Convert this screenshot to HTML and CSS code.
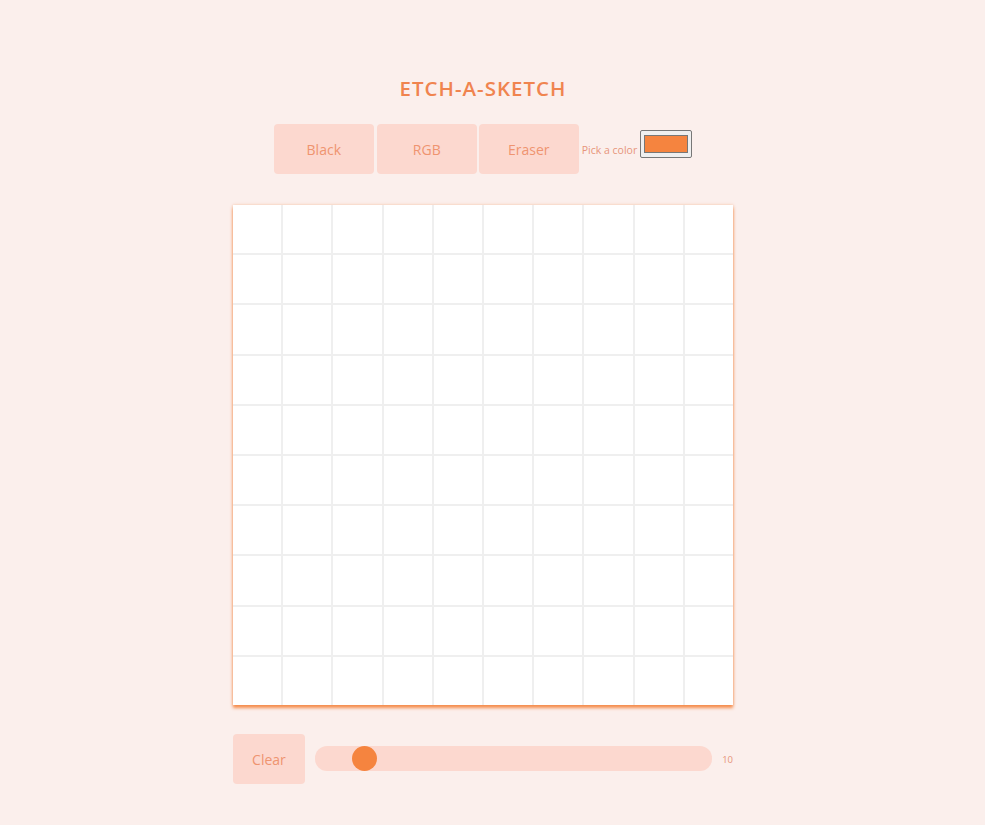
FILE: index.html
```html
<!DOCTYPE html>
<html>
<head>
<meta charset="utf-8">
<link rel="stylesheet" href="styles.css">
</head>
<body>
<main class="app">
  <h1 class="title">ETCH-A-SKETCH</h1>
  <div class="toolbar">
    <button class="btn mode">Black</button>
    <button class="btn mode">RGB</button>
    <button class="btn mode eraser">Eraser</button>
    <label class="picker-label">Pick a color</label>
    <span class="picker"><span class="swatch"></span></span>
  </div>
  <div class="board" id="board"></div>
  <div class="controls">
    <button class="btn clear">Clear</button>
    <input class="slider" type="range" min="0" max="100" value="10">
    <span class="size">10</span>
  </div>
</main>
<script>
  var b = document.getElementById('board');
  for (var i = 0; i < 100; i++) { var d = document.createElement('div'); d.className = 'cell'; b.appendChild(d); }
</script>
</body>
</html>
```
FILE: styles.css
```css
html, body { margin: 0; padding: 0; }
body {
  background: #fbefec;
  font-family: "Open Sans", "DejaVu Sans", sans-serif;
  height: 825px;
}
.app {
  width: 966px;
  display: flex;
  flex-direction: column;
  align-items: center;
  padding-top: 75px;
}
.title {
  margin: 0;
  color: #f0844f;
  font-size: 20.5px;
  font-weight: 600;
  letter-spacing: 1px;
  line-height: 26px;
}
.toolbar {
  display: flex;
  align-items: center;
  margin-top: 23px;
  gap: 3px;
  margin-left: 0;
}
.btn {
  border: none;
  background: #fcd8cf;
  color: #ef9470;
  font-family: inherit;
  font-size: 14px;
  border-radius: 4px;
  height: 50px;
  padding: 0;
}
.mode { width: 100px; }
.eraser { margin-left: -1px; }
.picker-label {
  font-size: 10.5px;
  color: #e7957b;
  margin-top: 2px;
}
.picker {
  width: 50px;
  height: 26px;
  border: 1px solid #777;
  border-radius: 2px;
  background: #efefef;
  display: flex;
  align-items: center;
  justify-content: center;
  margin-top: -10px;
}
.swatch {
  width: 44px;
  height: 18px;
  border: 1px solid #777;
  background: #f5843f;
  box-sizing: border-box;
}
.board {
  margin-top: 31px;
  width: 500px;
  height: 500px;
  display: grid;
  grid-template-columns: repeat(10, 1fr);
  grid-template-rows: repeat(10, 1fr);
  gap: 2px;
  background: #efefef;
  box-shadow: 0 3px 3px rgba(245, 132, 63, 0.9), 0 0 3px rgba(245, 132, 63, 0.4);
}
.cell { background: #ffffff; }
.controls {
  margin-top: 29px;
  width: 500px;
  display: flex;
  align-items: center;
}
.clear { width: 72px; }
.slider {
  -webkit-appearance: none;
  appearance: none;
  margin: -1px 0 0 10px;
  width: 398px;
  height: 25px;
  border-radius: 12px;
  background: #fcd8cf;
  outline: none;
}
.slider::-webkit-slider-thumb {
  -webkit-appearance: none;
  appearance: none;
  width: 25px;
  height: 25px;
  border-radius: 50%;
  background: #f5843f;
  border: none;
}
.size {
  margin-left: 10px;
  font-size: 9.5px;
  color: #e7957b;
}
```
